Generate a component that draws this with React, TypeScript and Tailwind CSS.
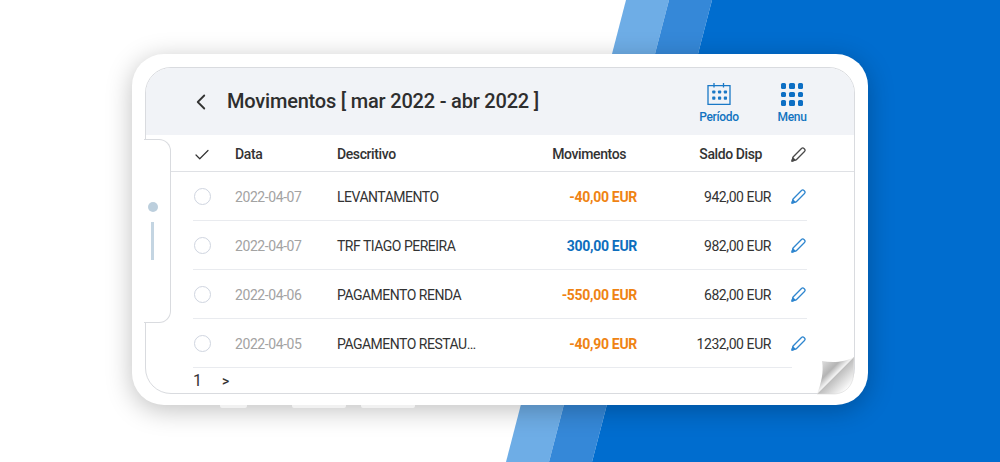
import { ChevronLeft, Check } from 'lucide-react'

const ROWS = [
  { date: '2022-04-07', desc: 'LEVANTAMENTO', amount: '-40,00 EUR', positive: false, saldo: '942,00 EUR' },
  { date: '2022-04-07', desc: 'TRF TIAGO PEREIRA', amount: '300,00 EUR', positive: true, saldo: '982,00 EUR' },
  { date: '2022-04-06', desc: 'PAGAMENTO RENDA', amount: '-550,00 EUR', positive: false, saldo: '682,00 EUR' },
  { date: '2022-04-05', desc: 'PAGAMENTO RESTAU…', amount: '-40,90 EUR', positive: false, saldo: '1232,00 EUR' },
]

function PencilIcon({ className }: { className: string }) {
  return (
    <svg viewBox="0 0 16 16" fill="none" stroke="currentColor" strokeWidth="1.4" strokeLinejoin="round" strokeLinecap="round" className={className}>
      <path d="M1 15 L2.2 10.6 L11.2 1.6 C12 0.8 13.2 0.9 14.1 1.8 C15 2.7 15.2 4 14.4 4.8 L5.4 13.8 Z" />
      <path d="M1 15 L2 11.6 L4.4 14 Z" fill="currentColor" />
    </svg>
  )
}

function CalendarIcon() {
  return (
    <svg viewBox="0 0 24 22" className="w-[24px] h-[22px] text-[#1a78c6]" fill="none" stroke="currentColor" strokeWidth="1.3">
      <path d="M1 2.6 H23 V21.3 H1 Z" />
      <path d="M7 0 V4.6 M16.5 0 V4.6" />
      <g fill="currentColor" stroke="none">
        <rect x="5.2" y="7.4" width="3.2" height="3.2" rx="0.8" />
        <rect x="11" y="7.4" width="3.2" height="3.2" rx="0.8" />
        <rect x="16.8" y="7.4" width="3.2" height="3.2" rx="0.8" />
        <rect x="5.2" y="13.6" width="3.2" height="3.2" rx="0.8" />
        <rect x="11" y="13.6" width="3.2" height="3.2" rx="0.8" />
        <rect x="16.8" y="13.6" width="3.2" height="3.2" rx="0.8" />
      </g>
    </svg>
  )
}

function MenuIcon() {
  return (
    <div className="grid grid-cols-3 gap-[3px] w-[23px] h-[22px]">
      {Array.from({ length: 9 }).map((_, i) => (
        <span key={i} className="w-[5.6px] h-[5.6px] rounded-[1.5px] bg-[#0d6fc4]" />
      ))}
    </div>
  )
}

function PageCurl() {
  return (
    <svg viewBox="0 0 41 39" className="absolute left-[683px] top-[302px] w-[41px] h-[39px]">
      <defs>
        <linearGradient id="flap" x1="0.1" y1="0.1" x2="0.62" y2="0.62">
          <stop offset="0" stopColor="#e2e2e2" />
          <stop offset="0.5" stopColor="#b4b4b4" />
          <stop offset="0.74" stopColor="#f2f2f2" />
          <stop offset="0.9" stopColor="#a0a0a0" />
          <stop offset="1" stopColor="#7f7f7f" />
        </linearGradient>
        <linearGradient id="under" x1="0.35" y1="0.35" x2="0.85" y2="0.85">
          <stop offset="0" stopColor="#9f9f9f" />
          <stop offset="1" stopColor="#ffffff" />
        </linearGradient>
      </defs>
      <path d="M39 1 L38.5 20 C37 30 31 37 20 38 L2 38 Z" fill="url(#under)" stroke="#d8d8d8" strokeWidth="0.6" />
      <path d="M7 5 C18 7 31 6 39 1 L2 38 C6 28 9 16 7 5 Z" fill="url(#flap)" />
    </svg>
  )
}

export default function App() {
  return (
    <div className="relative w-[1000px] h-[462px] overflow-hidden bg-white pl-[132px] pt-[54px] font-['Roboto',sans-serif]">
      {/* diagonal background */}
      <svg viewBox="0 0 1000 462" className="absolute inset-0 w-[1000px] h-[462px]">
        <polygon points="626,0 669,0 549,462 506,462" fill="#6eade6" />
        <polygon points="669,0 712,0 592,462 549,462" fill="#3588d8" />
        <polygon points="712,0 1000,0 1000,462 592,462" fill="#006dcf" />
      </svg>

      {/* phone */}
      <div className="relative w-[736px] h-[351px] rounded-[32px] bg-white p-[13px] shadow-[0_5px_26px_rgba(0,0,0,0.25)]">
        {/* side buttons */}
        <span className="absolute left-[88px] top-[351px] w-[27px] h-[3px] rounded-b-[2px] bg-[#f1f1f1]" />
        <span className="absolute left-[160px] top-[351px] w-[54px] h-[3px] rounded-b-[2px] bg-[#f1f1f1]" />
        <span className="absolute left-[229px] top-[351px] w-[54px] h-[3px] rounded-b-[2px] bg-[#f1f1f1]" />

        <div className="flex flex-col h-[327px] w-[710px] rounded-[26px] overflow-hidden border border-[#d9dbdf] bg-white">
          {/* header */}
          <div className="flex items-center h-[67px] shrink-0 bg-[#f1f3f7] pl-[44px]">
            <ChevronLeft className="w-[26px] h-[26px] text-[#333333] ml-[-2px]" strokeWidth={1.7} />
            <h1 className="ml-[13px] text-[20px] tracking-[-0.2px] font-medium text-[#2e2e2e] mb-[1px]">Movimentos [ mar 2022 - abr 2022 ]</h1>
            <div className="ml-auto flex flex-col items-center w-[40px] pt-[6px]">
              <CalendarIcon />
              <span className="mt-[3px] text-[12px] tracking-[-0.3px] font-medium text-[#1273c0]">Período</span>
            </div>
            <div className="ml-[33px] mr-[42px] flex flex-col items-center w-[40px] pt-[6px]">
              <MenuIcon />
              <span className="mt-[3px] text-[12px] tracking-[-0.3px] font-medium text-[#1273c0]">Menu</span>
            </div>
          </div>

          {/* table head */}
          <div className="flex items-center h-[37px] shrink-0 ml-[25px] pl-[22px] pt-[3px] border-b border-[#dfe1e5] text-[14px] tracking-[-0.4px] font-medium text-[#333333]">
            <div className="w-[42px] shrink-0">
              <Check className="w-[18px] h-[18px] text-[#333333]" strokeWidth={1.6} />
            </div>
            <div className="w-[102px] shrink-0">Data</div>
            <div className="w-[200px] shrink-0">Descritivo</div>
            <div className="w-[100px] shrink-0 text-right pr-[11px]">Movimentos</div>
            <div className="w-[134px] shrink-0 text-right pr-[9px]">Saldo Disp</div>
            <PencilIcon className="ml-[20px] w-[15px] h-[15px] shrink-0 text-[#4a4a4a]" />
          </div>

          {/* rows */}
          {ROWS.map((row, i) => (
            <div
              key={i}
              className={`flex items-center h-[49px] shrink-0 ml-[47px] pt-[3px] ${i === 3 ? 'w-[599px]' : 'w-[614px]'} border-b border-[#e9ebef] text-[14px] tracking-[-0.42px] text-[#333333]`}
            >
              <div className="w-[42px] shrink-0 mt-[-2px]">
                <span className="block w-[17px] h-[17px] ml-[1px] rounded-full border border-[#cfd5e0]" />
              </div>
              <div className="w-[102px] shrink-0 text-[#a3a3a3]">{row.date}</div>
              <div className="w-[200px] shrink-0 tracking-[-0.5px]">{row.desc}</div>
              <div className={`w-[100px] shrink-0 text-right font-bold tracking-[-0.3px] ${row.positive ? 'text-[#0d6ebd]' : 'text-[#ef8313]'}`}>{row.amount}</div>
              <div className="w-[134px] shrink-0 text-right">{row.saldo}</div>
              <PencilIcon className="ml-[20px] mt-[-2px] w-[15px] h-[15px] shrink-0 text-[#2f86cf]" />
            </div>
          ))}

          {/* pagination */}
          <div className="flex items-center flex-1 pl-[47px] text-[#333333] pt-[1px]">
            <span className="text-[16px] w-[29px]">1</span>
            <span className="text-[14px] font-medium">&gt;</span>
          </div>
        </div>

        {/* notch */}
        <div className="absolute left-[12px] top-[85px] w-[27px] h-[184px] bg-white border border-l-0 border-[#d9dbdf] rounded-r-[12px] flex flex-col items-center pt-[62px] pr-[9px]">
          <span className="w-[10px] h-[10px] rounded-full bg-[#bccfdd]" />
          <span className="mt-[10px] w-[3px] h-[38px] bg-[#c4d5e2]" />
        </div>

        <PageCurl />
      </div>
    </div>
  )
}
